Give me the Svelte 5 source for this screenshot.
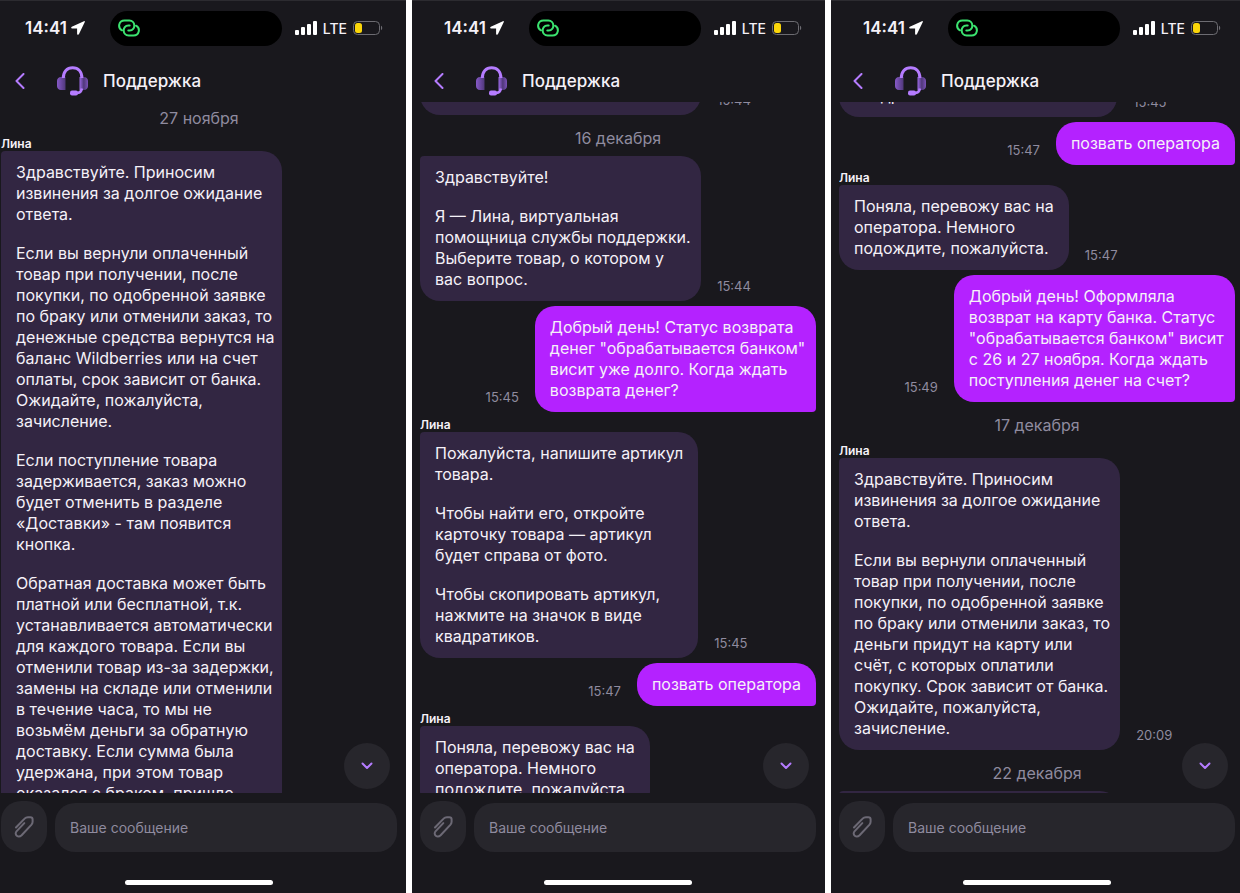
<script>
  const article = [
    ['Пожалуйста, напишите артикул', 'товара.'],
    ['Чтобы найти его, откройте', 'карточку товара — артикул', 'будет справа от фото.'],
    ['Чтобы скопировать артикул,', 'нажмите на значок в виде', 'квадратиков.']
  ];
  const transfer = [['Поняла, перевожу вас на', 'оператора. Немного', 'подождите, пожалуйста.']];
  const call = { type: 'user', time: '15:47', text: [['позвать оператора']] };

  const screens = [
    {
      scroll: 2,
      items: [
        { type: 'date', label: '27 ноября' },
        {
          type: 'bot', author: 'Лина', wide: true,
          text: [
            ['Здравствуйте. Приносим', 'извинения за долгое ожидание', 'ответа.'],
            ['Если вы вернули оплаченный', 'товар при получении, после', 'покупки, по одобренной заявке', 'по браку или отменили заказ, то', 'денежные средства вернутся на', 'баланс Wildberries или на счет', 'оплаты, срок зависит от банка.', 'Ожидайте, пожалуйста,', 'зачисление.'],
            ['Если поступление товара', 'задерживается, заказ можно', 'будет отменить в разделе', '«Доставки» - там появится', 'кнопка.'],
            ['Обратная доставка может быть', 'платной или бесплатной, т.к.', 'устанавливается автоматически', 'для каждого товара. Если вы', 'отменили товар из-за задержки,', 'замены на складе или отменили', 'в течение часа, то мы не', 'возьмём деньги за обратную', 'доставку. Если сумма была', 'удержана, при этом товар', 'оказался с браком, пришло']
          ]
        }
      ]
    },
    {
      scroll: 30,
      items: [
        { type: 'bot', time: '15:44', wide: true, text: [] },
        { type: 'date', label: '16 декабря' },
        {
          type: 'bot', time: '15:44', wide: true,
          text: [['Здравствуйте!'], ['Я — Лина, виртуальная', 'помощница службы поддержки.', 'Выберите товар, о котором у', 'вас вопрос.']]
        },
        {
          type: 'user', time: '15:45', wide: true,
          text: [['Добрый день! Статус возврата', 'денег "обрабатывается банком"', 'висит уже долго. Когда ждать', 'возврата денег?']]
        },
        { type: 'bot', author: 'Лина', time: '15:45', text: article },
        call,
        { type: 'bot', author: 'Лина', text: transfer }
      ]
    },
    {
      scroll: 211,
      items: [
        { type: 'bot', time: '15:45', text: article },
        call,
        { type: 'bot', author: 'Лина', time: '15:47', text: transfer },
        {
          type: 'user', time: '15:49', wide: true,
          text: [['Добрый день! Оформляла', 'возврат на карту банка. Статус', '"обрабатывается банком" висит', 'с 26 и 27 ноября. Когда ждать', 'поступления денег на счет?']]
        },
        { type: 'date', label: '17 декабря' },
        {
          type: 'bot', author: 'Лина', time: '20:09', wide: true,
          text: [
            ['Здравствуйте. Приносим', 'извинения за долгое ожидание', 'ответа.'],
            ['Если вы вернули оплаченный', 'товар при получении, после', 'покупки, по одобренной заявке', 'по браку или отменили заказ, то', 'деньги придут на карту или', 'счёт, с которых оплатили', 'покупку. Срок зависит от банка.', 'Ожидайте, пожалуйста,', 'зачисление.']
          ]
        },
        { type: 'date', label: '22 декабря' },
        { type: 'bot', wide: true, text: [] }
      ]
    }
  ];
</script>

<main>
  {#each screens as screen, i}
    <section class="phone">
      <div class="status">
        <div class="clock">
          <span>14:41</span>
          <svg width="14" height="14" viewBox="0 0 14 14"><path d="M12.900.2.800 5.800c-1 .5-.8 1.800.3 1.800h5v5.100c0 1.200 1.400 1.400 1.900.4L13.800 1.100c.3-.6-.3-1.200-.9-.9Z" fill="#fff" /></svg>
        </div>
        <div class="island">
          <svg width="22" height="18" viewBox="0 0 22 18" fill="none" stroke="#3be36f" stroke-width="2" stroke-linecap="round">
            <path d="M4 11.300C-.7 8.800.6 1.500 6.500 1.500h4.800c6.600 0 6.600 10 .4 10h-1.400" />
            <path d="M18 6.700c4.700 2.500 3.400 9.800-2.500 9.800h-4.800c-6.600 0-6.600-10-.4-10h1.400" />
          </svg>
        </div>
        <div class="signal">
          <svg width="22" height="14" viewBox="0 0 22 14" fill="#fff">
            <rect x="0" y="9" width="4" height="5" rx="1" /><rect x="6" y="6" width="4" height="8" rx="1" />
            <rect x="12" y="3" width="4" height="11" rx="1" /><rect x="18" y="0" width="4" height="14" rx="1" />
          </svg>
          <span>LTE</span>
          <svg width="30" height="14" viewBox="0 0 30 14">
            <rect x=".5" y=".5" width="26" height="13" rx="4" fill="none" stroke="#6d6c72" />
            <rect x="2" y="2" width="7" height="10" rx="2.500" fill="#fbd60a" />
            <path d="M28 4.800c1.600.6 1.600 3.800 0 4.400Z" fill="#6d6c72" />
          </svg>
        </div>
      </div>

      <header>
        <button class="back" aria-label="Назад">
          <svg width="10" height="16" viewBox="0 0 10 16" fill="none" stroke="#b57cff" stroke-width="2" stroke-linecap="round" stroke-linejoin="round"><path d="M8.500 1 1.500 8l7 7" /></svg>
        </button>
        <svg class="headset" width="32" height="30" viewBox="0 0 32 30">
          <defs>
            <linearGradient id="cup-l{i}"><stop offset="0" stop-color="#8659c8" /><stop offset="1" stop-color="#50387a" /></linearGradient>
            <linearGradient id="cup-r{i}"><stop offset="0" stop-color="#9a68e4" /><stop offset=".5" stop-color="#50387a" /><stop offset="1" stop-color="#7b52b8" /></linearGradient>
          </defs>
          <path d="M4 11h4.500v13H4c-2.500 0-4-2-4-4v-5c0-2 1.500-4 4-4Z" fill="url(#cup-l{i})" />
          <path d="M27 11h-4.500v13H27c2.500 0 4-2 4-4v-5c0-2-1.500-4-4-4Z" fill="url(#cup-r{i})" />
          <path d="M6.300 12C6.300 5.500 10 1.800 15.600 1.800S24.900 5.500 24.900 12" fill="none" stroke="#b57cff" stroke-width="3" />
          <path d="M24.900 22.500c-.4 3-2 4.500-5.400 4.500H16" fill="none" stroke="#b57cff" stroke-width="2.500" />
          <rect x="13" y="24.500" width="8" height="5" rx="2" fill="#b57cff" />
        </svg>
        <h1>Поддержка</h1>
      </header>

      <div class="chat">
        <div class="thread" style="margin-top: {-screen.scroll}px">
          {#each screen.items as item}
            {#if item.type === 'date'}
              <div class="date">{item.label}</div>
            {:else}
              <article class={item.type}>
                {#if item.author}<div class="author">{item.author}</div>{/if}
                <div class="row">
                  <div class="bubble" class:wide={item.wide}>
                    {#each item.text as lines}
                      <p>{lines.join('\n')}</p>
                    {/each}
                  </div>
                  {#if item.time}<time>{item.time}</time>{/if}
                </div>
              </article>
            {/if}
          {/each}
        </div>
        <button class="down" aria-label="Вниз">
          <svg width="12" height="8" viewBox="0 0 12 8" fill="none" stroke="#b57cff" stroke-width="2" stroke-linecap="round" stroke-linejoin="round"><path d="m1.500 1.500 4.500 4.500 4.500-4.500" /></svg>
        </button>
      </div>

      <footer>
        <div class="composer">
          <button class="attach" aria-label="Прикрепить файл">
            <svg width="20" height="22" viewBox="0 0 20 22" fill="none" stroke="#6c6975" stroke-width="2" stroke-linecap="round" stroke-linejoin="round"><path d="M2 11.500 10.600 2.600C11.600 1.500 12.600 1.200 14 1.200h2.300c1.400 0 2.300.9 2.300 2.300v2.300c0 1.200-.4 2.100-1.300 3.100L7.600 19.200c-3.300 3.300-8-.6-4.900-4.100l7.600-8" /></svg>
          </button>
          <input type="text" placeholder="Ваше сообщение" aria-label="Ваше сообщение" />
        </div>
        <div class="home"></div>
      </footer>
    </section>
  {/each}
</main>

<style>
  :global(body) {
    margin: 0;
    background: #fff;
  }
  main {
    display: grid;
    grid-template-columns: 406fr 413fr 409fr;
    gap: 6px;
    height: 100vh;
    font-family: Inter, 'Noto Sans', sans-serif;
    color: #f5f1f8;
  }
  .phone {
    display: flex;
    flex-direction: column;
    min-width: 0;
    box-sizing: border-box;
    padding: 0 9px 0 8px;
    background: #19181d;
    box-shadow: inset 0 1px #2c2b30;
    overflow: hidden;
  }
  .phone:first-child { padding-left: 1px; }
  .phone:last-child { padding-right: 5px; }
  button {
    display: grid;
    place-items: center;
    padding: 0;
    border: 0;
    background: none;
  }
  .status {
    display: grid;
    grid-template-columns: 1fr 172px 1fr;
    align-items: center;
    height: 56px;
    padding-right: 7px;
  }
  .clock {
    display: flex;
    align-items: center;
    gap: 4px;
    padding-left: 24px;
    font-size: 17px;
    font-weight: 600;
  }
  .island {
    display: flex;
    align-items: center;
    box-sizing: border-box;
    height: 35px;
    padding-left: 8px;
    border-radius: 18px;
    background: #000;
  }
  .signal {
    display: flex;
    align-items: center;
    justify-content: flex-end;
    gap: 6px;
    padding-right: 7px;
    font-size: 14px;
    font-weight: 500;
  }
  header {
    display: flex;
    align-items: center;
    height: 42px;
    padding-top: 4px;
  }
  .back {
    width: 37px;
    height: 40px;
  }
  .headset { margin: 0 14px 0 19px; }
  h1 {
    margin: 0;
    font-size: 17px;
    font-weight: 500;
    line-height: 24px;
  }
  .chat {
    position: relative;
    flex: 1 1 0;
    min-height: 0;
    overflow: hidden;
  }
  .thread {
    display: flex;
    flex-direction: column;
    gap: 5px;
  }
  .date {
    padding: 8px 0 2px;
    font-size: 16px;
    line-height: 21px;
    text-align: center;
    color: #8f8b9f;
  }
  .author {
    height: 15px;
    font-size: 12px;
    font-weight: 600;
    line-height: 15px;
  }
  .row {
    display: flex;
    align-items: flex-end;
    gap: 16px;
  }
  .user .row { flex-direction: row-reverse; }
  .bubble {
    display: flex;
    flex-direction: column;
    gap: 18px;
    box-sizing: border-box;
    min-height: 43px;
    padding: 11px 15px;
    border-radius: 4px 20px 20px 20px;
    background: #322642;
  }
  .user .bubble {
    border-radius: 20px 20px 4px 20px;
    background: #b422ff;
  }
  .wide { width: 71%; }
  p {
    margin: 0;
    font-size: 16px;
    line-height: 21px;
    white-space: pre;
  }
  time {
    padding-bottom: 7px;
    font-size: 13px;
    line-height: 16px;
    color: #8f8b9f;
  }
  .down {
    position: absolute;
    right: 7px;
    bottom: 4px;
    width: 46px;
    height: 46px;
    border-radius: 50%;
    background: #27262c;
  }
  footer {
    display: flex;
    flex-direction: column;
    justify-content: space-between;
    align-items: center;
    height: 92px;
    padding: 8px 0 0;
  }
  .composer {
    display: flex;
    align-items: flex-end;
    gap: 8px;
    width: 100%;
  }
  .attach {
    width: 46px;
    height: 51px;
    border-radius: 20px;
    background: #27262c;
  }
  input {
    flex: 1;
    min-width: 0;
    box-sizing: border-box;
    height: 49px;
    padding: 0 15px;
    border: 0;
    border-radius: 20px;
    background: #27262c;
    color: inherit;
    font-family: inherit;
    font-size: 14px;
  }
  input::placeholder {
    color: #8f8b9f;
    opacity: 1;
  }
  .home {
    width: 148px;
    height: 5px;
    margin-bottom: 8px;
    border-radius: 3px;
    background: #fff;
  }
</style>
